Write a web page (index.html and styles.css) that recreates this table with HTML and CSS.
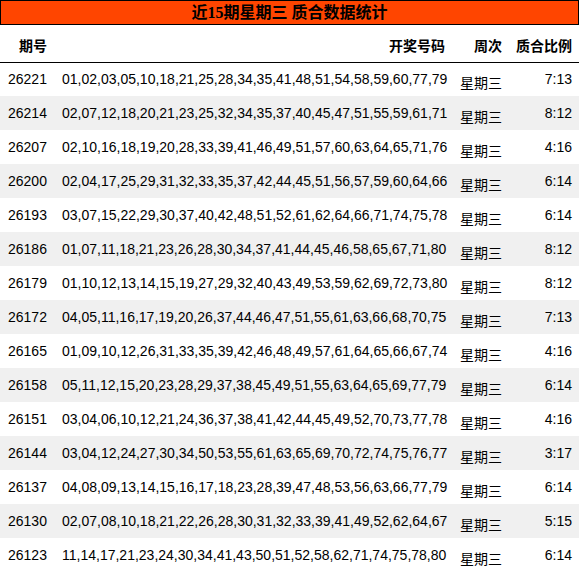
FILE: index.html
```html
<!DOCTYPE html>
<html lang="zh">
<head>
<meta charset="utf-8">
<title>近15期星期三 质合数据统计</title>
<link rel="stylesheet" href="styles.css">
</head>
<body>
<div class="wrap">
  <div class="title">近15期星期三 质合数据统计</div>
  <table class="stats">
    <colgroup>
      <col class="c1"><col class="c2"><col class="c3"><col class="c4">
    </colgroup>
    <thead>
      <tr><th>期号</th><th>开奖号码</th><th>周次</th><th>质合比例</th></tr>
    </thead>
    <tbody>
      <tr><td class="issue">26221</td><td class="nums">01,02,03,05,10,18,21,25,28,34,35,41,48,51,54,58,59,60,77,79</td><td class="week">星期三</td><td class="ratio">7:13</td></tr>
      <tr><td class="issue">26214</td><td class="nums">02,07,12,18,20,21,23,25,32,34,35,37,40,45,47,51,55,59,61,71</td><td class="week">星期三</td><td class="ratio">8:12</td></tr>
      <tr><td class="issue">26207</td><td class="nums">02,10,16,18,19,20,28,33,39,41,46,49,51,57,60,63,64,65,71,76</td><td class="week">星期三</td><td class="ratio">4:16</td></tr>
      <tr><td class="issue">26200</td><td class="nums">02,04,17,25,29,31,32,33,35,37,42,44,45,51,56,57,59,60,64,66</td><td class="week">星期三</td><td class="ratio">6:14</td></tr>
      <tr><td class="issue">26193</td><td class="nums">03,07,15,22,29,30,37,40,42,48,51,52,61,62,64,66,71,74,75,78</td><td class="week">星期三</td><td class="ratio">6:14</td></tr>
      <tr><td class="issue">26186</td><td class="nums">01,07,11,18,21,23,26,28,30,34,37,41,44,45,46,58,65,67,71,80</td><td class="week">星期三</td><td class="ratio">8:12</td></tr>
      <tr><td class="issue">26179</td><td class="nums">01,10,12,13,14,15,19,27,29,32,40,43,49,53,59,62,69,72,73,80</td><td class="week">星期三</td><td class="ratio">8:12</td></tr>
      <tr><td class="issue">26172</td><td class="nums">04,05,11,16,17,19,20,26,37,44,46,47,51,55,61,63,66,68,70,75</td><td class="week">星期三</td><td class="ratio">7:13</td></tr>
      <tr><td class="issue">26165</td><td class="nums">01,09,10,12,26,31,33,35,39,42,46,48,49,57,61,64,65,66,67,74</td><td class="week">星期三</td><td class="ratio">4:16</td></tr>
      <tr><td class="issue">26158</td><td class="nums">05,11,12,15,20,23,28,29,37,38,45,49,51,55,63,64,65,69,77,79</td><td class="week">星期三</td><td class="ratio">6:14</td></tr>
      <tr><td class="issue">26151</td><td class="nums">03,04,06,10,12,21,24,36,37,38,41,42,44,45,49,52,70,73,77,78</td><td class="week">星期三</td><td class="ratio">4:16</td></tr>
      <tr><td class="issue">26144</td><td class="nums">03,04,12,24,27,30,34,50,53,55,61,63,65,69,70,72,74,75,76,77</td><td class="week">星期三</td><td class="ratio">3:17</td></tr>
      <tr><td class="issue">26137</td><td class="nums">04,08,09,13,14,15,16,17,18,23,28,39,47,48,53,56,63,66,77,79</td><td class="week">星期三</td><td class="ratio">6:14</td></tr>
      <tr><td class="issue">26130</td><td class="nums">02,07,08,10,18,21,22,26,28,30,31,32,33,39,41,49,52,62,64,67</td><td class="week">星期三</td><td class="ratio">5:15</td></tr>
      <tr><td class="issue">26123</td><td class="nums">11,14,17,21,23,24,30,34,41,43,50,51,52,58,62,71,74,75,78,80</td><td class="week">星期三</td><td class="ratio">6:14</td></tr>
    </tbody>
  </table>
</div>
</body>
</html>
```

FILE: styles.css
```css
html, body {
  margin: 0;
  padding: 0;
  background: #ffffff;
}

.wrap {
  width: 579px;
}

.title {
  box-sizing: border-box;
  height: 25px;
  border: 1px solid #000;
  background: #ff4500;
  color: #000;
  font-family: "Liberation Serif", "Noto Sans CJK SC", serif;
  font-weight: bold;
  font-size: 16px;
  line-height: 23px;
  text-align: center;
}

.stats {
  width: 579px;
  table-layout: fixed;
  border-collapse: collapse;
  border-spacing: 0;
  font-family: "Liberation Sans", "Noto Sans CJK SC", sans-serif;
  font-size: 14px;
  color: #000;
}

.c1 { width: 55px; }
.c2 { width: 398px; }
.c3 { width: 56px; }
.c4 { width: 70px; }

.stats th {
  height: 37px;
  padding: 4px 7px 0 7px;
  box-sizing: border-box;
  font-weight: bold;
  text-align: right;
  vertical-align: middle;
  border-bottom: 1px solid #000;
  white-space: nowrap;
}

.stats th:first-child {
  padding-right: 8px;
}

.stats th:nth-child(2) {
  padding-right: 8px;
}

.stats td {
  height: 34px;
  padding: 0 7px;
  box-sizing: border-box;
  vertical-align: middle;
  white-space: nowrap;
}

.stats tbody tr:nth-child(even) td {
  background: #f0f0f0;
}

.stats td.issue {
  padding-left: 8px;
  text-align: left;
}

.stats td.nums {
  padding-right: 8px;
  text-align: right;
}

.stats td.week {
  padding-top: 5px;
  text-align: left;
}

.stats td.ratio {
  text-align: right;
}
```
